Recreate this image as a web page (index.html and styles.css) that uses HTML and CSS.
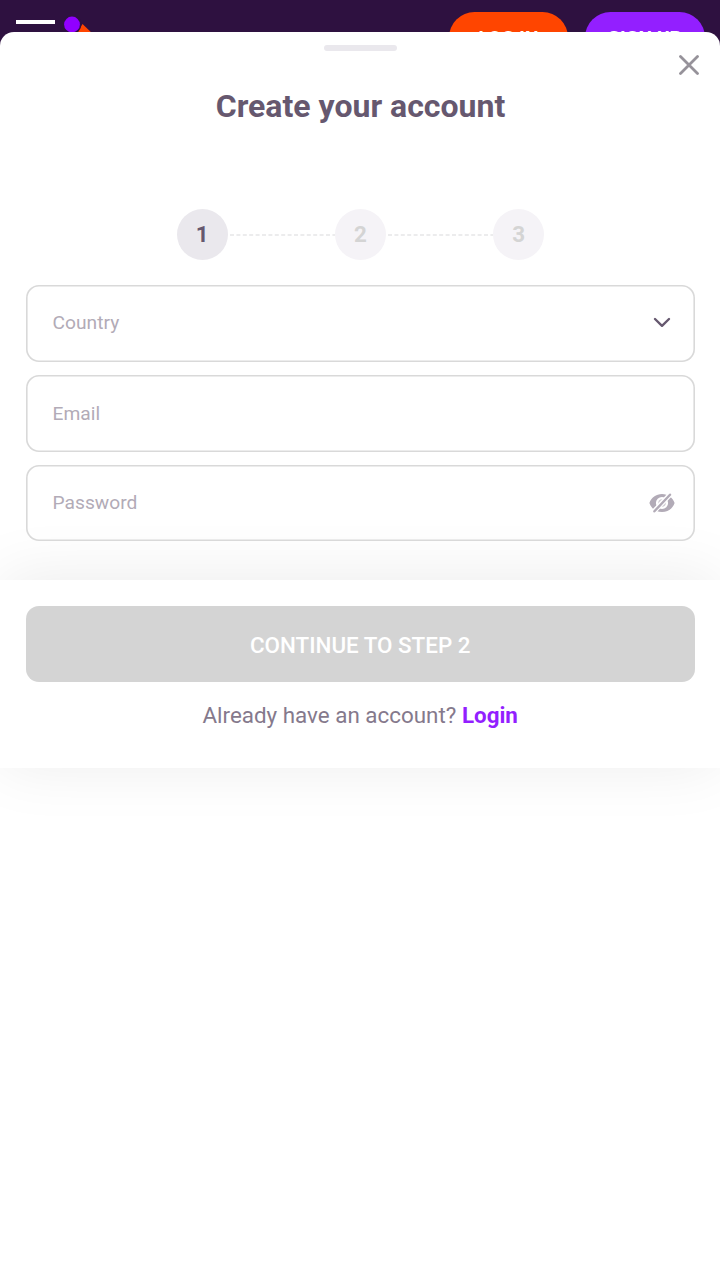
FILE: index.html
```html
<!DOCTYPE html>
<html lang="en">
  <head>
    <meta charset="UTF-8" />
    <meta name="viewport" content="width=device-width, initial-scale=1.0" />
    <title>Create your account</title>
    <link rel="stylesheet" href="styles.css" />
  </head>
  <body>
    <header class="topbar">
      <button class="menu-button" type="button" aria-label="Menu"></button>
      <svg class="logo" width="32" height="40" viewBox="0 0 32 40">
        <path d="M18.5 8L31 20V36H11V20Z" fill="#ff4500" />
        <circle cx="8" cy="8.5" r="9.4" fill="#2e1140" />
        <circle cx="8" cy="8.5" r="7.9" fill="#9100ff" />
      </svg>
      <div class="topbar-actions">
        <button class="pill pill-login" type="button">LOG IN</button>
        <button class="pill pill-signup" type="button">SIGN UP</button>
      </div>
    </header>

    <main class="sheet">
      <div class="sheet-handle"></div>
      <button class="close-button" type="button" aria-label="Close">
        <svg width="20" height="20" viewBox="0 0 20 20">
          <path d="M1.5 1.5L18.5 18.5M18.5 1.5L1.5 18.5" />
        </svg>
      </button>
      <h1 class="title">Create your account</h1>

      <div class="steps">
        <span class="step step-active">1</span>
        <svg class="step-line" height="2"><line x1="2" y1="1" x2="108" y2="1" /></svg>
        <span class="step">2</span>
        <svg class="step-line" height="2"><line x1="2" y1="1" x2="108" y2="1" /></svg>
        <span class="step">3</span>
      </div>

      <form class="form">
        <div class="field field-country">
          <span class="field-label">Country</span>
          <svg class="chevron" width="18" height="11" viewBox="0 0 18 11">
            <path d="M2 2L9 8.8L16 2" />
          </svg>
        </div>
        <div class="field">
          <span class="field-label">Email</span>
        </div>
        <div class="field field-password">
          <span class="field-label">Password</span>
          <svg class="eye" width="26" height="20" viewBox="0 0 26 20">
            <path
              class="eye-shape"
              fill-rule="evenodd"
              d="M.4 10C2.4 4.4 7 .9 13 .9S23.6 4.4 25.6 10C23.6 15.6 19 19.1 13 19.1S2.4 15.6.4 10ZM13 3.9a6.1 6.1 0 1 0 0 12.2a6.1 6.1 0 0 0 0-12.2Z"
            />
            <circle class="eye-shape" cx="13" cy="10" r="3.8" opacity="0.6" />
            <path class="eye-gap" d="M4.2 19.2L21.8 0.8" />
            <path class="eye-slash" d="M5.4 18.3L21 1.7" />
          </svg>
        </div>
      </form>

      <footer class="footer">
        <button class="continue-button" type="button">CONTINUE TO STEP 2</button>
        <p class="login-text">
          Already have an account? <a class="login-link" href="#">Login</a>
        </p>
      </footer>
    </main>
  </body>
</html>
```

FILE: styles.css
```css
*,
*::before,
*::after {
  box-sizing: border-box;
}

body {
  margin: 0;
  height: 1280px;
  overflow: hidden;
  background-color: #2e1140;
  color: #66586f;
  font-family: Roboto, "Liberation Sans", sans-serif;
}

button {
  border: 0;
  padding: 0;
  font-family: inherit;
}

.topbar {
  display: flex;
  align-items: flex-start;
  height: 74px;
  padding: 11.5px 15px 0 16px;
}

.menu-button {
  width: 39px;
  height: 34px;
  margin-top: 8.7px;
  background: none;
  border-top: 4px solid white;
  border-bottom: 4px solid white;
}

.logo {
  margin: 4.5px 0 0 9px;
}

.topbar-actions {
  display: flex;
  gap: 17px;
  margin-left: auto;
}

.pill {
  height: 51px;
  padding-top: 1px;
  border-radius: 26px;
  color: white;
  font-size: 19.2px;
  font-weight: 700;
}

.pill-login {
  width: 119px;
  background-color: #ff4500;
}

.pill-signup {
  width: 120px;
  background-color: #931fff;
}

/* covers the page below the top bar */
.sheet {
  position: absolute;
  inset: 32px 0 0;
  background-color: white;
  border-radius: 14px 14px 0 0;
  overflow: hidden;
}

.sheet-handle {
  width: 73px;
  height: 6.4px;
  margin: 12.6px auto 0;
  border-radius: 3px;
  background-color: #eae8ed;
}

.close-button {
  position: absolute;
  top: 23px;
  right: 21px;
  width: 20px;
  height: 20px;
  background: none;
}

.close-button svg {
  display: block;
  fill: none;
  stroke: #96929a;
  stroke-width: 2.8;
  stroke-linecap: round;
}

.title {
  margin: 36px 0 0;
  padding-left: 1px;
  font-size: 32px;
  font-weight: 700;
  line-height: 38px;
  text-align: center;
}

.steps {
  display: flex;
  align-items: center;
  justify-content: center;
  margin-top: 84px;
  padding-left: 1px;
}

.step {
  width: 51px;
  height: 51px;
  border-radius: 50%;
  background-color: #f5f3f7;
  color: #d4d4d4;
  font-size: 22.4px;
  font-weight: 700;
  line-height: 51px;
  text-align: center;
}

.step-active {
  background-color: #eae8ed;
  color: #66586f;
}

.step-line {
  width: 107.3px;
  margin-top: 1px;
  stroke: #e6e6e8;
  stroke-width: 1.3;
  stroke-dasharray: 4 2.4;
}

.form {
  display: flex;
  flex-direction: column;
  gap: 12.8px;
  padding: 25.4px 25.2px 0 25.6px;
}

.field {
  display: flex;
  align-items: center;
  justify-content: space-between;
  height: 76.8px;
  padding: 0 20px 0 27px;
  /* fractional outline, a border would be rounded down to 1px */
  box-shadow: inset 0 0 0 1.6px #d9d9d9;
  border-radius: 13px;
  color: #b2abb7;
  font-size: 19.2px;
}

.field-country {
  padding-right: 24px;
}

.field-country .field-label {
  margin-top: -3px;
}

.field-password .field-label {
  margin-top: -1px;
}

.chevron {
  margin-top: -2px;
  fill: none;
  stroke: #66586f;
  stroke-width: 2.4;
  stroke-linecap: round;
  stroke-linejoin: round;
}

.eye-shape {
  fill: #b2abb7;
}

.eye-gap {
  stroke: white;
  stroke-width: 5;
}

.eye-slash {
  stroke: #b2abb7;
  stroke-width: 2.4;
  stroke-linecap: round;
}

.footer {
  height: 188px;
  margin-top: 39px;
  padding: 25.2px 25.2px 0 25.6px;
  background-color: white;
  box-shadow: 0 -3px 64px rgba(0, 0, 0, 0.08);
  text-align: center;
}

.continue-button {
  display: block;
  width: 100%;
  height: 76.8px;
  padding-top: 3px;
  border-radius: 13px;
  background-color: #d4d4d4;
  color: white;
  font-size: 22.4px;
  font-weight: 500;
}

.login-text {
  margin: 20px 0 0;
  color: #85798c;
  font-size: 22.4px;
  line-height: 27px;
}

.login-link {
  color: #931fff;
  font-weight: 700;
  text-decoration: none;
}
```
